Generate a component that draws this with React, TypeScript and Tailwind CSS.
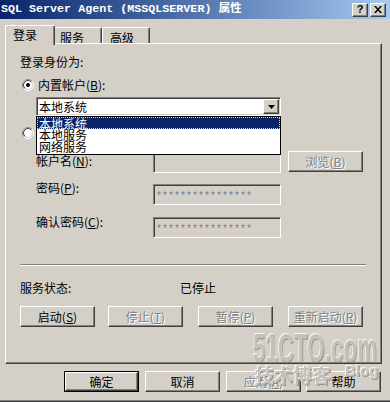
import React from "react";

const FONT = "font-['Noto_Sans_CJK_SC','Liberation_Sans',sans-serif]";
const RAISED =
  "border border-t-white border-l-white border-r-[#404040] border-b-[#404040] shadow-[inset_-1px_-1px_0_#808080]";
const SUNKEN =
  "border border-t-[#808080] border-l-[#808080] border-r-white border-b-white shadow-[inset_1px_1px_0_#404040,inset_-1px_-1px_0_#d4d0c8]";
const DIS = "text-[#808080] [text-shadow:1px_1px_0_#ffffff]";

function U({ children }: { children: React.ReactNode }) {
  return <span className="underline underline-offset-[1px]">{children}</span>;
}

function Btn({
  children,
  disabled,
  def,
  className = "",
}: {
  children: React.ReactNode;
  disabled?: boolean;
  def?: boolean;
  className?: string;
}) {
  const inner = (
    <div
      className={`${RAISED} bg-[#d4d0c8] flex items-center justify-center leading-[12px] w-full h-full ${
        disabled ? DIS : "text-black"
      }`}
    >
      {children}
    </div>
  );
  if (def) {
    return <div className={`border border-black w-[75px] h-[21px] shrink-0 ${className}`}>{inner}</div>;
  }
  return <div className={`w-[75px] h-[21px] shrink-0 ${className}`}>{inner}</div>;
}

function Radio({ checked }: { checked?: boolean }) {
  return (
    <svg width="12" height="12" viewBox="0 0 12 12" className="shrink-0">
      <circle cx="6" cy="6" r="5.5" fill="none" stroke="#ffffff" />
      <path d="M2.11 9.89 A5.5 5.5 0 0 1 9.89 2.11" fill="none" stroke="#808080" />
      <circle cx="6" cy="6" r="4.5" fill="#ffffff" stroke="#d4d0c8" />
      <path d="M2.82 9.18 A4.5 4.5 0 0 1 9.18 2.82" fill="none" stroke="#404040" />
      {checked && <circle cx="6" cy="6" r="2" fill="#000000" />}
    </svg>
  );
}

function TitleBtn({ children }: { children: React.ReactNode }) {
  return (
    <div className={`${RAISED} w-[16px] h-[14px] bg-[#d4d0c8] flex items-center justify-center`}>
      {children}
    </div>
  );
}

function PwdInput({ className = "" }: { className?: string }) {
  return (
    <div
      className={`${SUNKEN} w-[128px] h-[21px] bg-[#d4d0c8] flex items-center pl-[2px] shrink-0 ${className}`}
    >
      <span className="font-['Liberation_Mono',monospace] text-[10px] leading-[10px] text-[#808080] pt-[4px]">
        ****************
      </span>
    </div>
  );
}

export default function App() {
  return (
    <div
      className={`relative w-[390px] h-[402px] overflow-hidden bg-[#d4d0c8] text-[12px] text-black ${FONT} shadow-[inset_0_-1px_0_#404040,inset_0_-2px_0_#808080]`}
    >
      {/* Title bar */}
      <div className="h-[19px] flex items-center bg-linear-to-r from-[#0a246a] to-[#a6caf0] pl-[1px] pr-[4px]">
        <span className="font-['Liberation_Mono','Noto_Sans_CJK_SC',monospace] font-bold text-[11.7px] text-white whitespace-pre leading-none">
          SQL Server Agent (MSSQLSERVER) 属性
        </span>
        <div className="ml-auto flex gap-[2px]">
          <TitleBtn>
            <span className="font-['Liberation_Sans',sans-serif] font-bold text-[11px] leading-none text-black">?</span>
          </TitleBtn>
          <TitleBtn>
            <svg width="8" height="7" viewBox="0 0 8 7">
              <path d="M0 0h2l2 2.5L6 0h2L5 3.5 8 7H6L4 4.5 2 7H0l3-3.5z" fill="#000" />
            </svg>
          </TitleBtn>
        </div>
      </div>

      {/* Tabs */}
      <div className="mt-[6px] h-[18px] flex items-end pl-[5px]">
        <div className="relative z-10 -mb-[2px] h-[20px] w-[50px] bg-[#d4d0c8] border-t border-l border-r border-t-white border-l-white border-r-[#404040] shadow-[inset_-1px_0_0_#808080] rounded-t-[2px] pl-[7px] pt-[3px] leading-[12px]">
          登录
        </div>
        <div className="h-[16px] w-[47px] border-t border-r border-t-white border-r-[#404040] shadow-[inset_-1px_0_0_#808080] rounded-tr-[2px] pl-[5px] pt-[4px] leading-[12px]">
          服务
        </div>
        <div className="h-[16px] w-[48px] border-t border-l border-r border-t-white border-l-white border-r-[#404040] shadow-[inset_-1px_0_0_#808080] rounded-t-[2px] pl-[7px] pt-[4px] leading-[12px]">
          高级
        </div>
      </div>

      {/* Panel */}
      <div className={`relative ml-[5px] w-[377px] h-[321px] ${RAISED} pl-[14px] flex flex-col`}>
        <div className="mt-[12px] h-[12px] leading-[12px]">登录身份为:</div>

        <div className="mt-[11px] h-[12px] flex items-center ml-[2px]">
          <Radio checked />
          <span className="ml-[4px] leading-[12px]">
            内置帐户(<U>B</U>):
          </span>
        </div>

        {/* Combobox */}
        <div className={`relative mt-[6px] ml-[16px] w-[245px] h-[19px] ${SUNKEN} bg-white flex items-center`}>
          <span className="pl-[2px] leading-[12px]">本地系统</span>
          <div className={`ml-auto mr-[1px] w-[16px] h-[15px] ${RAISED} bg-[#d4d0c8] flex items-center justify-center`}>
            <svg width="7" height="4" viewBox="0 0 7 4">
              <path d="M0 0h7L3.5 4z" fill="#000" />
            </svg>
          </div>
          {/* Dropdown list */}
          <div className="absolute z-20 -left-[1px] top-[18px] w-[245px] h-[39px] bg-white border border-black">
            <div className="h-[12px] leading-[11px] bg-[#0a246a] text-white border border-dotted border-[#f0d890] pl-[1px]">
              本地系统
            </div>
            <div className="h-[12px] leading-[12px] pl-[2px]">本地服务</div>
            <div className="h-[12px] leading-[12px] pl-[2px]">网络服务</div>
          </div>
        </div>

        <div className="mt-[11px] h-[12px] flex items-center ml-[2px]">
          <Radio />
        </div>

        {/* Account name */}
        <div className="mt-[12px] flex items-start">
          <div className="ml-[16px] mt-[4px] w-[117px] leading-[12px]">
            帐户名(<U>N</U>):
          </div>
          <div className={`${SUNKEN} mt-[1px] w-[128px] h-[21px] bg-[#d4d0c8] shrink-0`} />
          <Btn disabled className="ml-[7px]">
            浏览(<U>B</U>)
          </Btn>
        </div>

        {/* Password */}
        <div className="mt-[9px] flex items-start">
          <div className="ml-[16px] w-[117px] leading-[12px]">
            密码(<U>P</U>):
          </div>
          <PwdInput className="mt-[2px]" />
        </div>

        {/* Confirm password */}
        <div className="mt-[11px] flex items-start">
          <div className="ml-[16px] w-[117px] leading-[12px]">
            确认密码(<U>C</U>):
          </div>
          <PwdInput className="mt-[1px]" />
        </div>

        <div className="mt-[26px] w-[346px] h-[2px] border-t border-t-[#808080] border-b border-b-white" />

        <div className="mt-[16px] flex leading-[12px]">
          <div className="w-[160px]">服务状态:</div>
          <div>已停止</div>
        </div>

        <div className="mt-[12px] flex">
          <Btn>
            启动(<U>S</U>)
          </Btn>
          <Btn disabled className="ml-[13px]">
            停止(<U>T</U>)
          </Btn>
          <Btn disabled className="ml-[15px]">
            暂停(<U>P</U>)
          </Btn>
          <Btn disabled className="ml-[15px]">
            重新启动(<U>R</U>)
          </Btn>
        </div>
      </div>

      {/* Dialog buttons */}
      <div className="mt-[7px] pl-[64px] flex">
        <Btn def>确定</Btn>
        <Btn className="ml-[6px]">取消</Btn>
        <Btn disabled className="ml-[6px]">
          应用(<U>A</U>)
        </Btn>
        <Btn className="ml-[5px]">帮助</Btn>
      </div>

      {/* Watermark */}
      <div className="pointer-events-none absolute left-[253px] top-[328px] opacity-90">
        <div className="origin-left scale-x-[0.56] whitespace-nowrap font-['Liberation_Sans',sans-serif] font-bold text-[40px] leading-[40px] text-[#c4c0b8] [text-shadow:-1px_-1px_0_#ffffff,1px_1px_0_#8c8880]">
          51CTO.com
        </div>
      </div>
      <div className="pointer-events-none absolute left-[255px] top-[365px] opacity-90 font-bold text-[19px] leading-[19px] text-[#c4c0b8] [text-shadow:-1px_-1px_0_#ffffff,1px_1px_0_#8c8880] whitespace-nowrap">
        技术博客
      </div>
      <div className="pointer-events-none absolute left-[345px] top-[363px] opacity-80 font-['Liberation_Sans',sans-serif] font-bold text-[15px] leading-[15px] text-[#c4c0b8] [text-shadow:-1px_-1px_0_#ffffff,1px_1px_0_#8c8880]">
        Blog
      </div>
    </div>
  );
}
